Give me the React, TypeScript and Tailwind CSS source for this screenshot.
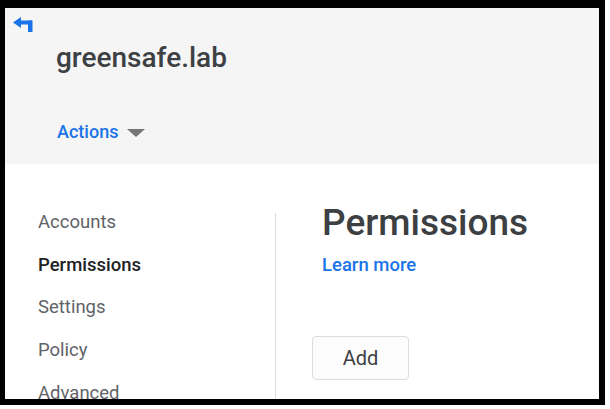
import React from "react";

export default function App() {
  const items = ["Accounts", "Permissions", "Settings", "Policy", "Advanced"];
  return (
    <div className="w-[610px] h-[409px] bg-white overflow-hidden" style={{ fontFamily: "Roboto, 'Liberation Sans', sans-serif" }}>
      <div className="w-[605px] h-[405px] border-l-[5px] border-t-[8px] border-r-[6px] border-b-[6px] border-black flex flex-col overflow-hidden">
        <header className="h-[156px] shrink-0 bg-[#f5f5f5] flex flex-col">
          <svg className="ml-[8px] mt-[9px]" width="21" height="15" viewBox="0 0 21 15" fill="#1a73e8">
            <polygon points="0,5.5 8,0 8,11" />
            <rect x="7" y="3.5" width="12" height="4" />
            <rect x="15" y="3.5" width="4.5" height="11.5" />
          </svg>
          <div className="ml-[51px] mt-[12px] text-[28px] leading-none font-medium text-[#3c4043]">greensafe.lab</div>
          <div className="ml-[52px] mt-[51px] flex items-center gap-[9px]">
            <span className="text-[18px] leading-none font-medium text-[#1a73e8]">Actions</span>
            <svg width="18" height="8" viewBox="0 0 18 8" className="mt-[2px]">
              <polygon points="0,0 18,0 9,8" fill="#757575" />
            </svg>
          </div>
        </header>
        <main className="flex-1 flex bg-white">
          <nav className="w-[270px] shrink-0 pt-[37px] pl-[33px] flex flex-col">
            {items.map((it) => (
              <div
                key={it}
                className={
                  "h-[42.67px] leading-[42.67px] text-[18.5px] shrink-0 " +
                  (it === "Permissions" ? "font-medium text-[#202124]" : "text-[#5f6368]")
                }
              >
                {it}
              </div>
            ))}
          </nav>
          <div className="w-px bg-[#dadce0] mt-[49px] self-stretch" />
          <section className="pl-[36px] flex flex-col items-start">
            <h1 className="ml-[10px] mt-[40px] text-[37px] leading-none font-medium text-[#3c4043]">Permissions</h1>
            <a className="ml-[10px] mt-[15px] text-[18.5px] leading-none font-medium text-[#1a73e8]">Learn more</a>
            <button className="mt-[61px] w-[97px] h-[44px] border border-[#dadce0] rounded-[4px] bg-[#fcfcfc] text-[20px] text-[#3c4043]">
              Add
            </button>
          </section>
        </main>
      </div>
    </div>
  );
}
